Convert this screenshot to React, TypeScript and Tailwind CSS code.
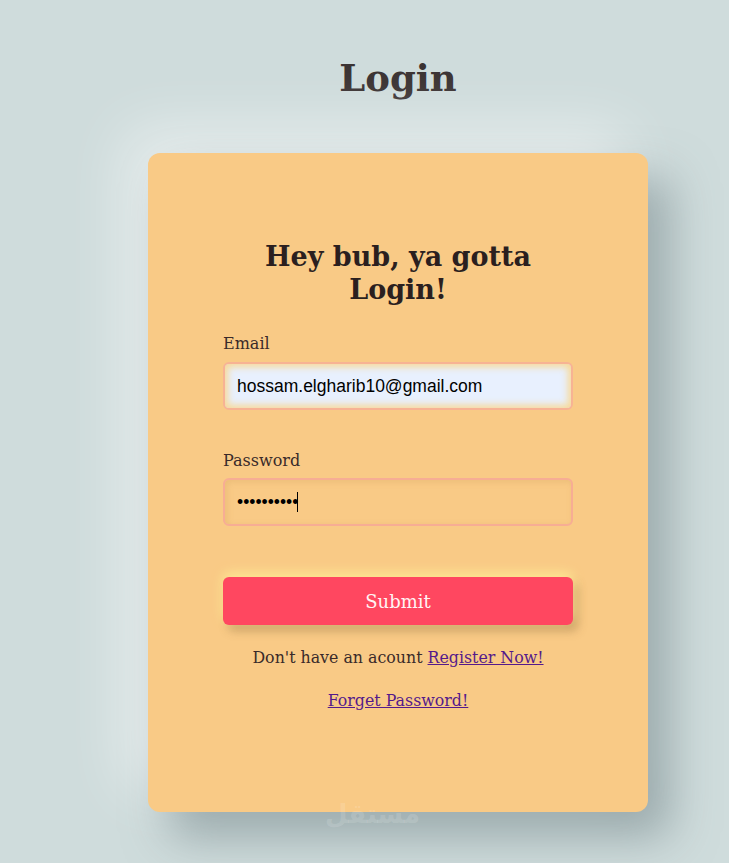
export default function App() {
  return (
    <div
      className="relative min-h-[863px] w-full overflow-hidden bg-[#cfdcdc] pl-[67px] pt-[53px]"
      style={{ fontFamily: '"DejaVu Serif", Georgia, serif' }}
    >
      <div className="flex flex-col items-center">
        <h1 className="text-[37px] font-bold leading-[50px] text-[#3b3333]">Login</h1>

        <div className="mt-[50px] flex h-[659px] w-[500px] flex-col rounded-xl bg-[#f9ca86] px-[75px] pt-[87px] shadow-[22px_25px_45px_rgba(110,128,132,0.55),-22px_-22px_60px_rgba(255,255,255,0.55)]">
          <h2 className="text-center text-[27px] font-bold leading-[33px] text-[#2b1f1f]">
            Hey bub, ya gotta
            <br />
            Login!
          </h2>

          <form className="mt-[28px] flex flex-col">
            <label className="text-[16px] leading-[20px] text-[#3a2a2a]">Email</label>
            <input
              type="email"
              readOnly
              value="hossam.elgharib10@gmail.com"
              className="mt-[8px] h-[48px] w-full rounded-md border-2 border-[#f7b394] bg-[#e8f0fe] px-3 text-[17.5px] text-black shadow-[inset_0_0_7px_3px_rgba(248,214,140,0.9)] outline-none"
              style={{ fontFamily: '"Liberation Sans", Arial, sans-serif' }}
            />

            <label className="mt-[41px] text-[16px] leading-[20px] text-[#3a2a2a]">Password</label>
            <div className="relative mt-[7px]">
              <input
                type="password"
                readOnly
                value="hossamelgh"
                className="h-[48px] w-full rounded-md border-2 border-[#f7ad94] bg-transparent px-3 text-[17.5px] text-black shadow-[inset_2px_2px_6px_rgba(200,150,80,0.25)] outline-none"
                style={{ fontFamily: '"Liberation Sans", Arial, sans-serif' }}
              />
              <span className="absolute left-[74px] top-[14px] h-[20px] w-px bg-black" />
            </div>

            <button
              type="button"
              className="mt-[51px] h-[48px] w-full rounded-md bg-[#ff4760] text-[18px] text-[#fff4f4] shadow-[0_-4px_12px_rgba(255,236,150,0.9),5px_6px_10px_rgba(120,90,50,0.35)]"
            >
              Submit
            </button>

            <p className="mt-[23px] text-center text-[15.8px] leading-[20px] text-[#3a2a2a]">
              Don&apos;t have an acount{" "}
              <a href="#" className="text-[#551a8b] underline">
                Register Now!
              </a>
            </p>
            <p className="mt-[23px] text-center text-[15.8px] leading-[20px]">
              <a href="#" className="text-[#551a8b] underline">
                Forget Password!
              </a>
            </p>
          </form>
        </div>
      </div>

      <span
        className="pointer-events-none absolute left-[325px] top-[795px] text-[26px] font-bold text-white/15"
        style={{ fontFamily: '"DejaVu Sans", sans-serif' }}
      >
        مستقل
      </span>
    </div>
  );
}
